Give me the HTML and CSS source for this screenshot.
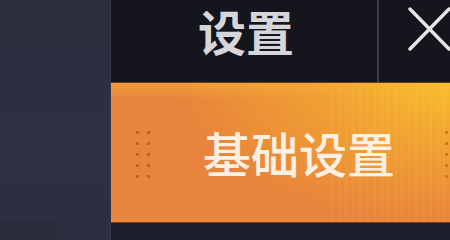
FILE: index.html
```html
<!DOCTYPE html>
<html lang="zh-CN">

<head>
    <meta charset="UTF-8">
    <meta name="viewport" content="width=device-width, initial-scale=1.0">
    <title>设置</title>
    <link rel="stylesheet" href="styles.css">
</head>

<body>
    <div class="page">
        <div class="side">
            <div class="side-foot"></div>
        </div>
        <div class="head">
            <div class="title">设置</div>
            <div class="line"></div>
            <div class="close">
                <svg width="46" height="46" viewBox="0 0 46 46">
                    <path d="M3 4 L42 44 M42 4 L3 44" stroke="#e6e6e6" stroke-width="3.4" stroke-linecap="round" fill="none" />
                </svg>
            </div>
        </div>
        <div class="tab">
            <div class="dots">
                <i></i><i></i><i></i><i></i><i></i><i></i><i></i><i></i><i></i><i></i>
            </div>
            <div class="tab-text">基础设置</div>
            <div class="dots dots-right">
                <i></i><i></i><i></i><i></i><i></i><i></i><i></i><i></i><i></i><i></i>
            </div>
        </div>
        <div class="foot"></div>
    </div>
</body>

</html>
```

FILE: styles.css
```css
* {
    padding: 0;
    margin: 0;
    box-sizing: border-box;
}

body {
    width: 450px;
    height: 240px;
    overflow: hidden;
    background: #1b1e2a;
    font-family: "Noto Sans CJK SC", "Noto Sans", sans-serif;
}

.page {
    display: grid;
    grid-template-columns: 111px 1fr;
    grid-template-rows: 82px 141px 1fr;
    width: 450px;
    height: 240px;
}

.side {
    grid-row: 1 / 4;
    background: linear-gradient(180deg, #2a2e3d 0%, #2c3041 60%, #2b2f3f 100%);
    border-right: 1px solid #353a4a;
    display: flex;
    flex-direction: column;
    justify-content: flex-end;
}

.side-foot {
    width: 55px;
    height: 18px;
    background: #282c3a;
}

.head {
    display: flex;
    background: #15151d;
}

.title {
    flex: 1;
    text-align: center;
    padding-top: 2px;
    padding-left: 4px;
    font-size: 48px;
    line-height: 1.2;
    font-weight: bold;
    color: #d6d6d8;
}

.line {
    width: 2px;
    background: #3b3b44;
}

.close {
    width: 71px;
    overflow: hidden;
    padding-top: 5px;
    padding-left: 28px;
}

.close svg {
    display: block;
}

.tab {
    display: flex;
    align-items: center;
    overflow: hidden;
    border-top: 1px solid #6a3a1a;
    border-bottom: 1px solid #7a4420;
    background:
        repeating-linear-gradient(90deg, rgba(255, 235, 140, 0.05) 0 3px, rgba(255, 235, 140, 0) 3px 7px),
        radial-gradient(ellipse 80% 100% at 100% 0%, rgba(248, 190, 44, 1) 0%, rgba(246, 178, 46, 0.75) 35%, rgba(240, 150, 56, 0) 100%),
        linear-gradient(180deg, rgba(250, 205, 60, 0.35) 0%, rgba(250, 205, 60, 0) 12%),
        #e8843b;
    background-size: 35% 100%, 100% 100%, 100% 100%, auto;
    background-position: right top, 0 0, 0 0, 0 0;
    background-repeat: no-repeat;
}

.dots {
    display: grid;
    grid-template-columns: 3px 3px;
    column-gap: 8px;
    row-gap: 8px;
    margin-left: 25px;
    margin-top: 4px;
}

.dots i {
    display: block;
    width: 3px;
    height: 3px;
    background: #c0611f;
}

.tab-text {
    margin-left: 53px;
    font-size: 48px;
    line-height: 1.2;
    font-weight: 500;
    color: #fbf0e2;
    white-space: nowrap;
}

.dots-right {
    margin-left: 50px;
}

.dots-right i {
    background: #cc7a24;
}

.foot {
    background: #1b1e2a;
}
```
